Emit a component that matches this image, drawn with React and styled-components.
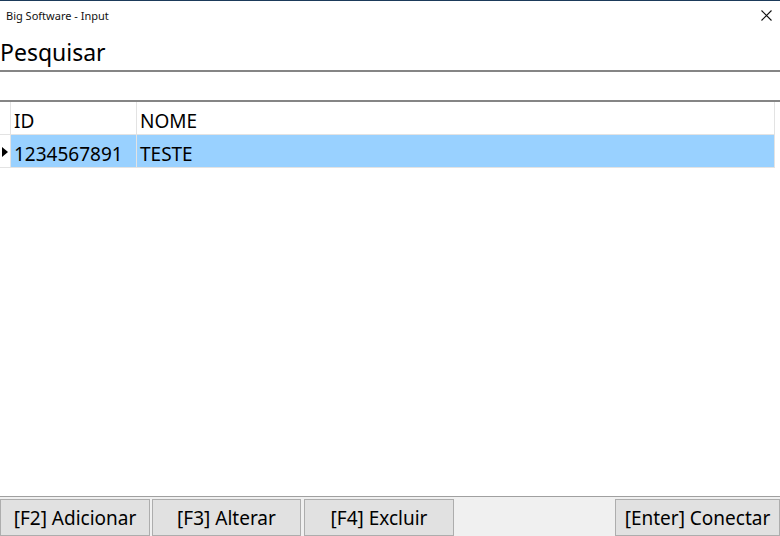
import React from 'react'
import styled, { createGlobalStyle } from 'styled-components'

const GlobalStyle = createGlobalStyle`
  html, body { margin: 0; padding: 0; background: #fff; }
  body { font-family: "Noto Sans", "Open Sans", sans-serif; color: #000; }
`

const Window = styled.div`
  width: 780px;
  height: 536px;
  display: flex;
  flex-direction: column;
  background: #fff;
  overflow: hidden;
`

const TitleBar = styled.div`
  height: 30px;
  box-sizing: border-box;
  border-top: 1px solid #1b3a5a;
  display: flex;
  align-items: center;
  justify-content: space-between;
  padding: 0 8px 0 6px;
  font-size: 11px;
  color: #111;
  .close{
    display: flex;
    align-items: center;
    margin-top: -1px;
  }
`

const Heading = styled.div`
  height: 42px;
  box-sizing: border-box;
  border-bottom: 2px solid #858585;
  font-size: 23px;
  line-height: 44px;
  padding-left: 0;
`

const SearchInput = styled.input`
  height: 30px;
  box-sizing: border-box;
  border: none;
  border-bottom: 2px solid #858585;
  outline: none;
  font-family: inherit;
  font-size: 18px;
  padding: 0 4px;
  width: 100%;
`

const Grid = styled.div`
  flex: 1;
  background: #fff;
`

const Table = styled.div`
  width: 775px;
  border-right: 1px solid #e3e3e3;
  box-sizing: border-box;
`

const Row = styled.div`
  display: grid;
  grid-template-columns: 11px 126px 1fr;
  height: 33px;
  box-sizing: border-box;
  border-bottom: 1px solid #e3e3e3;
  background: ${({selected}) => selected ? '#99d1ff' : '#fff'};
  font-size: 19px;
`

const Cell = styled.div`
  display: flex;
  align-items: center;
  padding: 5px 0 0 3px;
  border-right: ${({last}) => last ? 'none' : '1px solid #e3e3e3'};
  white-space: nowrap;
`

const RowHead = styled.div`
  background: #fff;
  border-right: 1px solid #e3e3e3;
  display: flex;
  align-items: center;
  justify-content: center;
  padding-top: 1px;
`

const Footer = styled.div`
  height: 40px;
  box-sizing: border-box;
  border-top: 1px solid #a0a0a0;
  background: #f0f0f0;
  padding-top: 2px;
  display: flex;
  gap: 2px;
`

const Button = styled.button`
  height: 37px;
  width: ${({w}) => w}px;
  margin-left: ${({ml}) => ml || 0}px;
  box-sizing: border-box;
  border: 1px solid #adadad;
  background: #e1e1e1;
  font-family: inherit;
  font-size: 19px;
  color: #000;
  padding: 0;
`

const Spacer = styled.div`
  flex: 1;
`

const App = () => {
  return (
    <>
      <GlobalStyle/>
      <Window>
        <TitleBar>
          <span>Big Software - Input</span>
          <span className="close">
            <svg width="11" height="11" viewBox="0 0 11 11">
              <path d="M0.5 0.5 L10.5 10.5 M10.5 0.5 L0.5 10.5" stroke="#111" strokeWidth="1.1" fill="none"/>
            </svg>
          </span>
        </TitleBar>
        <Heading>Pesquisar</Heading>
        <SearchInput type="text"/>
        <Grid>
          <Table>
            <Row>
              <RowHead/>
              <Cell>ID</Cell>
              <Cell last>NOME</Cell>
            </Row>
            <Row selected>
              <RowHead>
                <svg width="6" height="10" viewBox="0 0 6 10">
                  <path d="M0 0 L6 5 L0 10 Z" fill="#000"/>
                </svg>
              </RowHead>
              <Cell>1234567891</Cell>
              <Cell last>TESTE</Cell>
            </Row>
          </Table>
        </Grid>
        <Footer>
          <Button w={150}>[F2] Adicionar</Button>
          <Button w={149}>[F3] Alterar</Button>
          <Button w={150} ml={1}>[F4] Excluir</Button>
          <Spacer/>
          <Button w={165}>[Enter] Conectar</Button>
        </Footer>
      </Window>
    </>
  )
}

export default App
